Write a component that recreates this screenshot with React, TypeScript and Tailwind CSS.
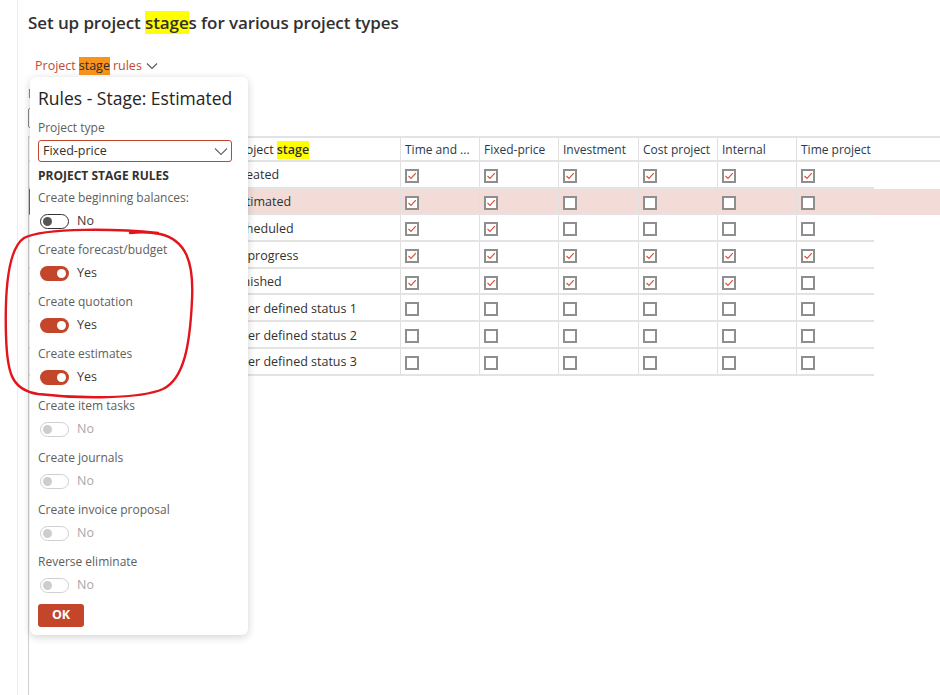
import React from 'react';

const FONT = "font-['Open_Sans',sans-serif]";

const columns = [
  { label: 'Time and ...', width: 'w-[79px]' },
  { label: 'Fixed-price', width: 'w-[79px]' },
  { label: 'Investment', width: 'w-[80px]' },
  { label: 'Cost project', width: 'w-[79px]' },
  { label: 'Internal', width: 'w-[79px]' },
  { label: 'Time project', width: 'w-[78px]' },
];

const stages = [
  { name: 'Created', values: [1, 1, 1, 1, 1, 1] },
  { name: 'Estimated', values: [1, 1, 0, 0, 0, 0], selected: true },
  { name: 'Scheduled', values: [1, 1, 0, 0, 0, 0] },
  { name: 'In progress', values: [1, 1, 1, 1, 1, 1] },
  { name: 'Finished', values: [1, 1, 1, 1, 1, 0] },
  { name: 'User defined status 1', values: [0, 0, 0, 0, 0, 0] },
  { name: 'User defined status 2', values: [0, 0, 0, 0, 0, 0] },
  { name: 'User defined status 3', values: [0, 0, 0, 0, 0, 0] },
];

const rules = [
  { label: 'Create beginning balances:', state: 'off' },
  { label: 'Create forecast/budget', state: 'on' },
  { label: 'Create quotation', state: 'on' },
  { label: 'Create estimates', state: 'on' },
  { label: 'Create item tasks', state: 'disabled' },
  { label: 'Create journals', state: 'disabled' },
  { label: 'Create invoice proposal', state: 'disabled' },
  { label: 'Reverse eliminate', state: 'disabled' },
];

const Check = ({ checked }: { checked: boolean }) => (
  <div className="w-[14px] h-[14px] border-2 border-[#8e8e8e] bg-white flex items-center justify-center">
    {checked && (
      <svg width="10" height="10" viewBox="0 0 10 10">
        <path d="M1.5 5 L4 7.5 L8.8 2.2" fill="none" stroke="#d6543a" strokeWidth="1.2" />
      </svg>
    )}
  </div>
);

const Toggle = ({ state }: { state: string }) => {
  if (state === 'on') {
    return (
      <div className="w-[29px] h-[15px] rounded-full bg-[#c4462a] flex items-center justify-end pr-[3px]">
        <div className="w-[9px] h-[9px] rounded-full bg-white" />
      </div>
    );
  }
  if (state === 'off') {
    return (
      <div className="w-[29px] h-[15px] rounded-full border border-[#333] bg-white flex items-center pl-[2px]">
        <div className="w-[9px] h-[9px] rounded-full bg-[#555]" />
      </div>
    );
  }
  return (
    <div className="w-[29px] h-[15px] rounded-full border border-[#cfcfcf] bg-white flex items-center pl-[2px]">
      <div className="w-[9px] h-[9px] rounded-full bg-[#cdcdcd]" />
    </div>
  );
};

export default function App() {
  return (
    <div className={`relative w-[940px] h-[695px] bg-white overflow-hidden flex ${FONT} text-[#323130]`}>
      <div className="w-[18px] h-full border-r border-[#ececec]" />

      <div className="flex-1 pl-[10px] flex flex-col">
        <div className="pt-[10px] h-[34px] text-[17px] leading-[25px] font-semibold tracking-[-0.1px] whitespace-nowrap">
          Set up project <span className="bg-[#ffff00]">stage</span>s for various project types
        </div>
        <div className="mt-[22px] h-[20px] pl-[7px] flex items-center text-[12.5px] text-[#c24a31] whitespace-nowrap">
          Project <span className="bg-[#f7941d] text-[#2b2b2b] mx-[3px]">stage</span> rules
          <svg className="ml-[4px]" width="12" height="8" viewBox="0 0 12 8">
            <path d="M1 1.5 L6 6.5 L11 1.5" fill="none" stroke="#555" strokeWidth="1.1" />
          </svg>
        </div>

        {/* toolbar hidden under the callout */}
        <div className="h-[60px] pt-[13px] flex flex-col gap-[9px]">
          <div className="text-[12px] text-[#2f5f9f] leading-[10px]">E</div>
          <div className="w-[60px] h-[20px] border border-[#8a8a8a] rounded-[2px]" />
        </div>

        {/* grid */}
        <div className="flex-1 border-l border-[#cfcfcf] flex flex-col text-[12.5px]">
          <div className="h-[26px] flex border-t-2 border-b-2 border-[#e3e3e3] pt-[2px] text-[12px]">
            <div className="w-[200px]" />
            <div className="w-[171px] pl-[4px] flex items-center whitespace-nowrap text-[12.5px]">
              Project <span className="bg-[#ffff00] font-semibold ml-[3px]">stage</span>
            </div>
            {columns.map((c) => (
              <div key={c.label} className={`${c.width} border-l border-[#e0e0e0] -mt-[2px] pt-[2px] pl-[4px] flex items-center whitespace-nowrap text-[#2a3a4a]`}>
                {c.label}
              </div>
            ))}
          </div>
          {stages.map((s) => (
            <div key={s.name} className={`h-[26.7px] flex ${s.selected ? 'bg-[#f3dcd8]' : ''}`}>
              <div className={`flex border-b-2 border-[#e3e3e3] ${s.selected ? 'border-l-2 border-l-[#c4462a]' : ''}`}>
                <div className={s.selected ? 'w-[198px]' : 'w-[200px]'} />
                <div className="w-[171px] pl-[4px] pt-[3px] flex items-center whitespace-nowrap">{s.name}</div>
                {columns.map((c, i) => (
                  <div key={c.label} className={`${c.width} border-l border-[#e0e0e0] pl-[4px] pt-[3px] flex items-center`}>
                    <Check checked={s.values[i] === 1} />
                  </div>
                ))}
              </div>
            </div>
          ))}
        </div>
      </div>

      {/* callout */}
      <div className="absolute left-[30px] top-[77px] w-[218px] h-[558px] bg-white rounded-[6px] shadow-[0_2px_8px_rgba(0,0,0,0.18)] px-[8px] pt-[9px] flex flex-col">
        <div className="h-[24px] leading-[24px] text-[17.5px] text-[#252423] whitespace-nowrap">Rules - Stage: Estimated</div>
        <div className="mt-[10px] h-[16px] leading-[16px] text-[12px] text-[#605e5c]">Project type</div>
        <div className="mt-[4px] w-[194px] h-[22px] border border-[#c4462a] rounded-[3px] flex items-center justify-between pl-[4px] pr-[3px] text-[12.5px]">
          <span>Fixed-price</span>
          <svg width="14" height="9" viewBox="0 0 14 9">
            <path d="M1 1.5 L7 7.5 L13 1.5" fill="none" stroke="#666" strokeWidth="1.1" />
          </svg>
        </div>
        <div className="mt-[6px] h-[16px] leading-[16px] text-[12px] font-bold text-[#323130]">PROJECT STAGE RULES</div>
        <div className="mt-[6px] flex flex-col">
          {rules.map((r) => (
            <div key={r.label} className="h-[52px]">
              <div className="h-[16px] leading-[16px] text-[12px] text-[#605e5c] whitespace-nowrap">{r.label}</div>
              <div className="mt-[5px] h-[20px] flex items-center gap-[8px] pl-[2px]">
                <Toggle state={r.state} />
                <span className={`text-[12.5px] ${r.state === 'disabled' ? 'text-[#a8a8a8]' : 'text-[#3b3a39]'}`}>
                  {r.state === 'on' ? 'Yes' : 'No'}
                </span>
              </div>
            </div>
          ))}
        </div>
        <button className="w-[46px] h-[23px] -mt-[2px] bg-[#c4462a] rounded-[3px] text-white text-[12.5px] font-bold">OK</button>
      </div>

      {/* hand drawn annotation */}
      <svg className="absolute left-0 top-0 pointer-events-none" width="940" height="695" viewBox="0 0 940 695">
        <path
          d="M158 233 C120 229 45 227 24 238 C6 250 5 300 6 335 C7 372 11 390 38 394 C80 399 140 399 163 389 C184 379 190 345 192 300 C194 262 186 240 160 234 C150 232 140 232 130 233"
          fill="none"
          stroke="#e3141c"
          strokeWidth="2.4"
          strokeLinecap="round"
        />
      </svg>
    </div>
  );
}
